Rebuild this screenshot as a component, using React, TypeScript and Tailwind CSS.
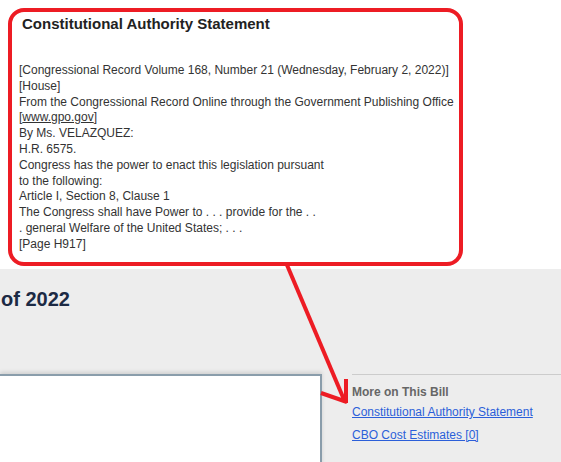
import React from "react";

const bodyLines: React.ReactNode[] = [
  "[Congressional Record Volume 168, Number 21 (Wednesday, February 2, 2022)]",
  "[House]",
  "From the Congressional Record Online through the Government Publishing Office",
  <>
    [<span className="underline">www.gpo.gov</span>]
  </>,
  "By Ms. VELAZQUEZ:",
  "H.R. 6575.",
  "Congress has the power to enact this legislation pursuant",
  "to the following:",
  "Article I, Section 8, Clause 1",
  "The Congress shall have Power to . . . provide for the . .",
  ". general Welfare of the United States; . . .",
  "[Page H917]",
];

// Red annotation arrow drawn over the page
const Arrow: React.FC = () => (
  <svg
    className="absolute inset-0 pointer-events-none"
    width={561}
    height={462}
    viewBox="0 0 561 462"
  >
    <g stroke="#ed1c24" strokeWidth={4} strokeLinecap="butt" fill="none">
      <line x1={287} y1={265} x2={345} y2={402} />
      <line x1={346} y1={379} x2={346} y2={403} />
      <line x1={321} y1={393} x2={347} y2={402} />
    </g>
  </svg>
);

export default function App() {
  return (
    <div
      className="relative w-[561px] h-[462px] overflow-hidden bg-white"
      style={{ fontFamily: '"Liberation Sans", Arial, sans-serif' }}
    >
      {/* callout */}
      <div className="h-[269px] pt-[8px] pl-[8px]">
        <div className="w-[455px] h-[258px] border-4 border-[#ed1c24] rounded-[16px] bg-white pt-[3px] pl-[7px]">
          <h3 className="ml-[3px] text-[15px] leading-[18px] font-bold text-[#222]">
            Constitutional Authority Statement
          </h3>
          <div className="mt-[30px] text-[12px] leading-[15.8px] text-[#333]">
            {bodyLines.map((line, i) => (
              <div key={i}>{line}</div>
            ))}
          </div>
        </div>
      </div>

      {/* page below */}
      <div className="bg-[#ededed] h-[193px] pt-[18px]">
        <h1 className="pl-[1px] text-[20px] leading-[24px] font-bold text-[#1c2a44]">
          of 2022
        </h1>
        <div className="mt-[63px] flex">
          <div className="w-[322px] h-[100px] bg-white border-t-2 border-r-2 border-[#8a9dab] shadow-[0_-2px_4px_rgba(0,0,0,0.12)]" />
          <div className="flex-1 ml-[30px] border-t border-[#cccccc] pt-[9px] text-[12px] leading-[16px]">
            <div className="font-bold text-[#666]">More on This Bill</div>
            <a href="#" className="block mt-[4px] text-[#2b5fd9] underline">
              Constitutional Authority Statement
            </a>
            <a href="#" className="block mt-[7px] text-[#2b5fd9] underline">
              CBO Cost Estimates [0]
            </a>
          </div>
        </div>
      </div>

      <Arrow />
    </div>
  );
}
